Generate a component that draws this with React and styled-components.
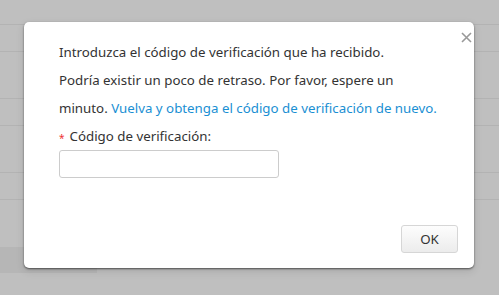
import styled, { createGlobalStyle } from "styled-components";

const Global = createGlobalStyle`
  html, body { margin: 0; padding: 0; }
  body {
    width: 499px;
    height: 295px;
    overflow: hidden;
    background: #bfbfbf;
    font-family: "Noto Sans", "Liberation Sans", sans-serif;
  }
`;

const Page = styled.div`
  position: relative;
  width: 499px;
  height: 295px;
`;

const Backdrop = styled.div`
  display: flex;
  flex-direction: column;
  padding-top: 24px;
`;

const BgRow = styled.div`
  height: ${(p) => p.h}px;
  border-top: 1px solid #b3b3b3;
  box-sizing: border-box;
`;

const BgStrip = styled.div`
  height: 26px;
  width: 97px;
  background: #b6b6b6;
`;

const Overlay = styled.div`
  position: absolute;
  inset: 0;
  display: flex;
  align-items: flex-start;
  padding: 22px 0 0 24px;
`;

const Dialog = styled.div`
  position: relative;
  width: 450px;
  height: 246px;
  box-sizing: border-box;
  background: #fff;
  border-radius: 5px;
  box-shadow: 0 1px 2px rgba(0, 0, 0, 0.55), 0 3px 8px rgba(0, 0, 0, 0.12);
  padding: 16px 35px 15px 35px;
  display: flex;
  flex-direction: column;
`;

const Close = styled.button`
  position: absolute;
  top: 9px;
  right: 2px;
  width: 12px;
  height: 12px;
  padding: 0;
  border: 0;
  background: none;
  display: flex;
  align-items: center;
  justify-content: center;
`;

const Text = styled.p`
  margin: 0;
  font-size: 13.3px;
  line-height: 28px;
  color: #333;
`;

const Link = styled.a`
  color: #1a8fd3;
  text-decoration: none;
`;

const Label = styled.div`
  font-size: 13.3px;
  line-height: 28px;
  color: #333;
  display: flex;
  align-items: center;
`;

const Star = styled.span`
  color: #e33;
  font-size: 10px;
  margin-right: 5px;
  position: relative;
  top: 2px;
`;

const Input = styled.input`
  width: 220px;
  height: 28px;
  box-sizing: border-box;
  border: 1px solid #ccc;
  border-radius: 3px;
  outline: none;
`;

const Footer = styled.div`
  margin-top: auto;
  display: flex;
  justify-content: flex-end;
  margin-right: -19px;
`;

const Button = styled.button`
  width: 57px;
  height: 28px;
  border: 1px solid #d6d6d6;
  border-radius: 3px;
  background: linear-gradient(#fdfdfd, #ececec);
  font-family: "Noto Sans", "Liberation Sans", sans-serif;
  font-size: 13.3px;
  color: #333;
  padding: 0;
`;

export default function App() {
  return (
    <Page>
      <Global />
      <Backdrop>
        <BgRow h={27} />
        <BgRow h={47} />
        <BgRow h={27} />
        <BgRow h={47} />
        <BgRow h={27} />
        <BgRow h={48} />
        <BgStrip />
      </Backdrop>
      <Overlay>
        <Dialog>
          <Close aria-label="close">
            <svg width="11" height="11" viewBox="0 0 11 11">
              <path d="M1 1L10 10M10 1L1 10" stroke="#999" strokeWidth="1.6" />
            </svg>
          </Close>
          <Text>Introduzca el código de verificación que ha recibido.</Text>
          <Text>
            Podría existir un poco de retraso. Por favor, espere un minuto.{" "}
            <Link href="#">Vuelva y obtenga el código de verificación de nuevo.</Link>
          </Text>
          <Label>
            <Star>*</Star>Código de verificación:
          </Label>
          <Input />
          <Footer>
            <Button>OK</Button>
          </Footer>
        </Dialog>
      </Overlay>
    </Page>
  );
}
